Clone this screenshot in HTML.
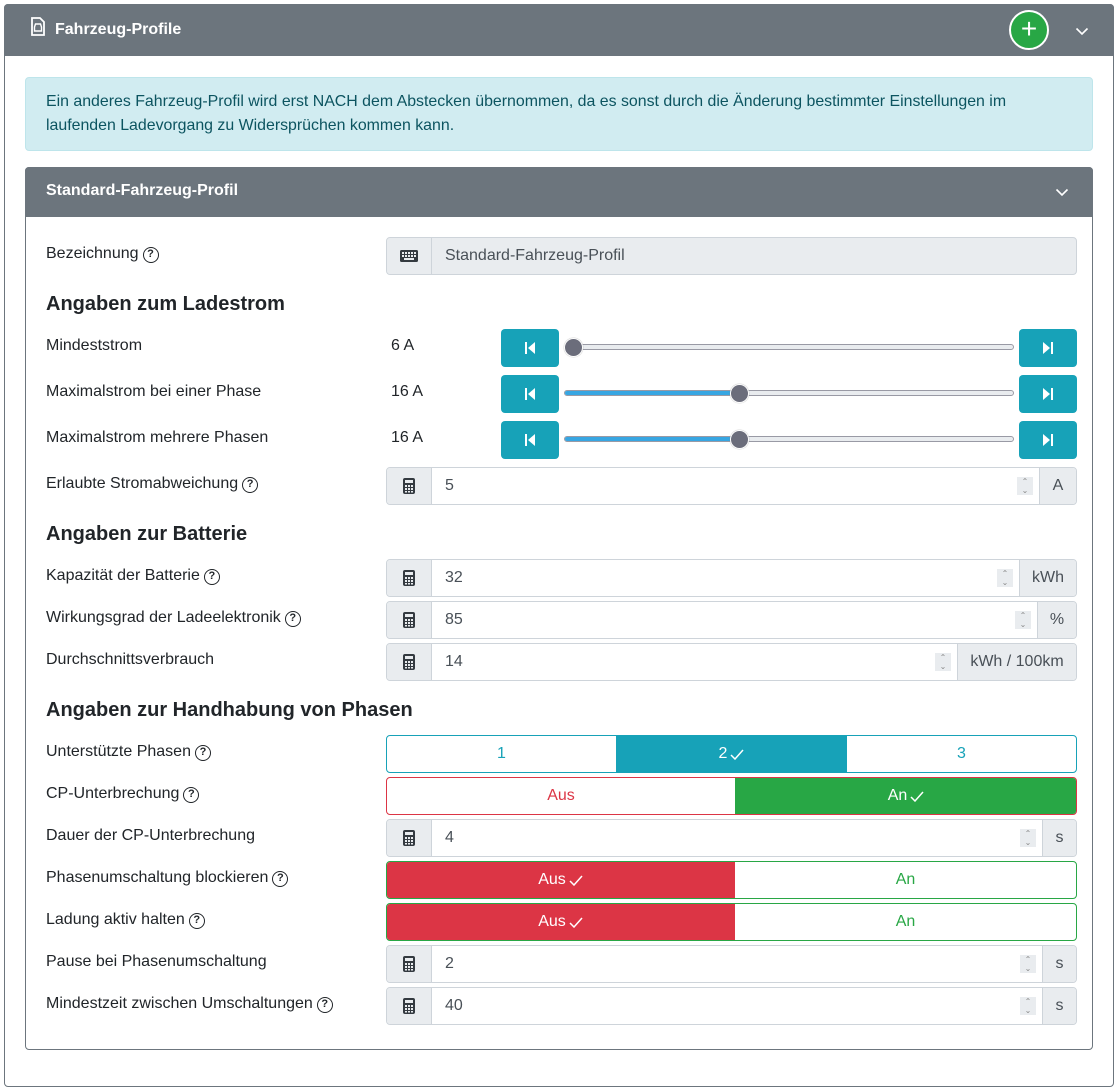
<!DOCTYPE html>
<html><head><meta charset="utf-8"><style>
*{box-sizing:border-box;margin:0;padding:0}
body{width:1118px;height:1092px;background:#fff;font-family:"Liberation Sans",sans-serif;font-size:16px;color:#212529;position:relative;overflow:hidden}
.a{position:absolute}
.outer{left:4px;top:4px;width:1110px;height:1083px;border:1px solid #6c757d;border-radius:4px}
.hdr{left:4px;top:4px;width:1110px;height:52px;background:#6c757d;border-radius:4px 4px 0 0}
.alert{left:25px;top:77px;width:1068px;height:74px;background:#d1ecf1;border:1px solid #bee5eb;border-radius:4px;color:#0c5460;padding:12px 20px;line-height:24px;font-size:15.9px}
.inner{left:25px;top:167px;width:1068px;height:883px;border:1px solid #6c757d;border-radius:4px}
.ihdr{left:25px;top:167px;width:1068px;height:50px;background:#6c757d;border-radius:4px 4px 0 0}
.lbl{left:46px;height:20px;line-height:20px}
.q{display:inline-block;width:16px;height:16px;border:1.3px solid #212529;border-radius:50%;font-size:11px;font-weight:bold;line-height:13px;text-align:center;vertical-align:1px;margin-left:4px}
h3{position:absolute;left:46px;font-size:20px;font-weight:bold;line-height:24px}
.ig{left:386px;height:38px;border:1px solid #ced4da;border-radius:4px;display:flex;overflow:hidden;background:#fff}
.ad{width:45px;background:#e9ecef;border-right:1px solid #ced4da;display:flex;align-items:center;justify-content:center}
.val{flex:1;padding-left:13px;line-height:36px;color:#495057;position:relative}
.unit{background:#e9ecef;border-left:1px solid #ced4da;line-height:36px;text-align:center;color:#495057}
.sp{position:absolute;right:6px;top:9px;width:16px;height:18px;background:#e9ecef;font-size:8px;line-height:9px;text-align:center;color:#888}
.btn{width:58px;height:38px;background:#17a2b8;border-radius:4px;display:flex;align-items:center;justify-content:center}
.track{left:564px;width:450px;height:6px;background:#e9ecef;border:1px solid #999aa5;border-radius:3px}
.fill{height:4px;background:#37a6e2;border-radius:3px}
.knob{width:19px;height:19px;border-radius:50%;background:#6b6d7b;border:1.5px solid #fff;box-shadow:0 0 1px #888}
.bg{left:386px;height:38px;display:flex;border-radius:4px;overflow:hidden}
.bg div{display:flex;align-items:center;justify-content:center}
.ck{margin-left:3px}
</style></head><body>
<div class="a outer"></div>
<div class="a hdr"></div>
<svg class="a" style="left:30px;top:17px" width="16" height="20" viewBox="0 0 16 20"><path d="M2 1h8l4 4v13H2z" fill="none" stroke="#fff" stroke-width="1.8"/><path d="M4.5 10l1-3h5l1 3v4h-7z" fill="none" stroke="#fff" stroke-width="1.4"/></svg>
<div class="a" style="left:55px;top:21px;color:#fff;font-weight:bold;font-size:16px">Fahrzeug-Profile</div>
<div class="a" style="left:1009px;top:10px;width:40px;height:40px;border-radius:50%;background:#28a745;border:2px solid #fff;color:#fff;font-size:28px;line-height:34px;text-align:center">+</div>
<svg class="a" style="left:1075px;top:27px" width="14" height="9"><path d="M1.5 1.5l5.5 5.5 5.5-5.5" fill="none" stroke="#fff" stroke-width="1.6"/></svg>
<div class="a alert">Ein anderes Fahrzeug-Profil wird erst NACH dem Abstecken übernommen, da es sonst durch die Änderung bestimmter Einstellungen im laufenden Ladevorgang zu Widersprüchen kommen kann.</div>
<div class="a inner"></div>
<div class="a ihdr"></div>
<div class="a" style="left:46px;top:182px;color:#fff;font-weight:bold;font-size:16px">Standard-Fahrzeug-Profil</div>
<svg class="a" style="left:1055px;top:188px" width="14" height="9"><path d="M1.5 1.5l5.5 5.5 5.5-5.5" fill="none" stroke="#fff" stroke-width="1.6"/></svg>

<div class="a lbl" style="top:244px">Bezeichnung<span class="q">?</span></div>
<div class="a ig" style="top:237px;width:691px;background:#e9ecef"><div class="ad"><svg width="18" height="12"><rect x="0" y="0" width="18" height="12" rx="1.5" fill="#343a40"/><g fill="#e9ecef"><rect x="2" y="2" width="2" height="2"/><rect x="5" y="2" width="2" height="2"/><rect x="8" y="2" width="2" height="2"/><rect x="11" y="2" width="2" height="2"/><rect x="14" y="2" width="2" height="2"/><rect x="2" y="5" width="2" height="2"/><rect x="5" y="5" width="2" height="2"/><rect x="8" y="5" width="2" height="2"/><rect x="11" y="5" width="2" height="2"/><rect x="14" y="5" width="2" height="2"/><rect x="4" y="8" width="10" height="2"/></g></svg></div><div class="val">Standard-Fahrzeug-Profil</div></div>

<h3 style="top:292px">Angaben zum Ladestrom</h3>

<div class="a lbl" style="top:336px">Mindeststrom</div><div class="a" style="left:391px;top:337px">6 A</div>
<div class="a lbl" style="top:382px">Maximalstrom bei einer Phase</div><div class="a" style="left:391px;top:383px">16 A</div>
<div class="a lbl" style="top:428px">Maximalstrom mehrere Phasen</div><div class="a" style="left:391px;top:429px">16 A</div>

<div class="a btn" style="left:501px;top:329px"><svg width="10" height="12"><rect x="0" y="0" width="2" height="12" fill="#fff"/><path d="M10 0v12L3 6z" fill="#fff"/></svg></div>
<div class="a btn" style="left:1019px;top:329px"><svg width="10" height="12"><rect x="8" y="0" width="2" height="12" fill="#fff"/><path d="M0 0v12l7-6z" fill="#fff"/></svg></div>
<div class="a track" style="top:344px"></div><div class="a knob" style="left:564px;top:338px"></div>

<div class="a btn" style="left:501px;top:375px"><svg width="10" height="12"><rect x="0" y="0" width="2" height="12" fill="#fff"/><path d="M10 0v12L3 6z" fill="#fff"/></svg></div>
<div class="a btn" style="left:1019px;top:375px"><svg width="10" height="12"><rect x="8" y="0" width="2" height="12" fill="#fff"/><path d="M0 0v12l7-6z" fill="#fff"/></svg></div>
<div class="a track" style="top:390px"><div class="fill" style="width:175px"></div></div><div class="a knob" style="left:730px;top:384px"></div>

<div class="a btn" style="left:501px;top:421px"><svg width="10" height="12"><rect x="0" y="0" width="2" height="12" fill="#fff"/><path d="M10 0v12L3 6z" fill="#fff"/></svg></div>
<div class="a btn" style="left:1019px;top:421px"><svg width="10" height="12"><rect x="8" y="0" width="2" height="12" fill="#fff"/><path d="M0 0v12l7-6z" fill="#fff"/></svg></div>
<div class="a track" style="top:436px"><div class="fill" style="width:175px"></div></div><div class="a knob" style="left:730px;top:430px"></div>

<div class="a lbl" style="top:474px">Erlaubte Stromabweichung<span class="q">?</span></div>
<div class="a ig" style="top:467px;width:691px"><div class="ad"><svg width="12" height="16"><rect width="12" height="16" rx="2" fill="#343a40"/><rect x="2" y="2" width="8" height="3" fill="#e9ecef"/><g fill="#e9ecef"><rect x="2" y="7" width="2" height="2"/><rect x="5" y="7" width="2" height="2"/><rect x="8" y="7" width="2" height="2"/><rect x="2" y="10" width="2" height="2"/><rect x="5" y="10" width="2" height="2"/><rect x="8" y="10" width="2" height="2"/><rect x="2" y="13" width="2" height="1.5"/><rect x="5" y="13" width="2" height="1.5"/><rect x="8" y="13" width="2" height="1.5"/></g></svg></div><div class="val">5<span class="sp">⌃<br>⌄</span></div><div class="unit" style="width:37px">A</div></div>

<h3 style="top:522px">Angaben zur Batterie</h3>

<div class="a lbl" style="top:566px">Kapazität der Batterie<span class="q">?</span></div>
<div class="a ig" style="top:559px;width:691px"><div class="ad"><svg width="12" height="16"><rect width="12" height="16" rx="2" fill="#343a40"/><rect x="2" y="2" width="8" height="3" fill="#e9ecef"/><g fill="#e9ecef"><rect x="2" y="7" width="2" height="2"/><rect x="5" y="7" width="2" height="2"/><rect x="8" y="7" width="2" height="2"/><rect x="2" y="10" width="2" height="2"/><rect x="5" y="10" width="2" height="2"/><rect x="8" y="10" width="2" height="2"/><rect x="2" y="13" width="2" height="1.5"/><rect x="5" y="13" width="2" height="1.5"/><rect x="8" y="13" width="2" height="1.5"/></g></svg></div><div class="val">32<span class="sp">⌃<br>⌄</span></div><div class="unit" style="width:57px">kWh</div></div>

<div class="a lbl" style="top:608px">Wirkungsgrad der Ladeelektronik<span class="q">?</span></div>
<div class="a ig" style="top:601px;width:691px"><div class="ad"><svg width="12" height="16"><rect width="12" height="16" rx="2" fill="#343a40"/><rect x="2" y="2" width="8" height="3" fill="#e9ecef"/><g fill="#e9ecef"><rect x="2" y="7" width="2" height="2"/><rect x="5" y="7" width="2" height="2"/><rect x="8" y="7" width="2" height="2"/><rect x="2" y="10" width="2" height="2"/><rect x="5" y="10" width="2" height="2"/><rect x="8" y="10" width="2" height="2"/><rect x="2" y="13" width="2" height="1.5"/><rect x="5" y="13" width="2" height="1.5"/><rect x="8" y="13" width="2" height="1.5"/></g></svg></div><div class="val">85<span class="sp">⌃<br>⌄</span></div><div class="unit" style="width:39px">%</div></div>

<div class="a lbl" style="top:650px">Durchschnittsverbrauch</div>
<div class="a ig" style="top:643px;width:691px"><div class="ad"><svg width="12" height="16"><rect width="12" height="16" rx="2" fill="#343a40"/><rect x="2" y="2" width="8" height="3" fill="#e9ecef"/><g fill="#e9ecef"><rect x="2" y="7" width="2" height="2"/><rect x="5" y="7" width="2" height="2"/><rect x="8" y="7" width="2" height="2"/><rect x="2" y="10" width="2" height="2"/><rect x="5" y="10" width="2" height="2"/><rect x="8" y="10" width="2" height="2"/><rect x="2" y="13" width="2" height="1.5"/><rect x="5" y="13" width="2" height="1.5"/><rect x="8" y="13" width="2" height="1.5"/></g></svg></div><div class="val">14<span class="sp">⌃<br>⌄</span></div><div class="unit" style="width:119px">kWh / 100km</div></div>

<h3 style="top:698px">Angaben zur Handhabung von Phasen</h3>

<div class="a lbl" style="top:742px">Unterstützte Phasen<span class="q">?</span></div>
<div class="a bg" style="top:735px;width:691px;border:1px solid #17a2b8"><div style="width:229px;color:#17a2b8">1</div><div style="width:231px;background:#17a2b8;color:#fff">2<svg class="ck" width="14" height="11"><path d="M1 6l4 4 8-9" fill="none" stroke="#fff" stroke-width="1.5"/></svg></div><div style="flex:1;color:#17a2b8">3</div></div>

<div class="a lbl" style="top:784px">CP-Unterbrechung<span class="q">?</span></div>
<div class="a bg" style="top:777px;width:691px;border:1px solid #dc3545"><div style="width:348px;color:#dc3545">Aus</div><div style="flex:1;background:#28a745;color:#fff;margin:-1px -1px -1px 0">An<svg class="ck" width="14" height="11"><path d="M1 6l4 4 8-9" fill="none" stroke="#fff" stroke-width="1.5"/></svg></div></div>

<div class="a lbl" style="top:826px">Dauer der CP-Unterbrechung</div>
<div class="a ig" style="top:819px;width:691px"><div class="ad"><svg width="12" height="16"><rect width="12" height="16" rx="2" fill="#343a40"/><rect x="2" y="2" width="8" height="3" fill="#e9ecef"/><g fill="#e9ecef"><rect x="2" y="7" width="2" height="2"/><rect x="5" y="7" width="2" height="2"/><rect x="8" y="7" width="2" height="2"/><rect x="2" y="10" width="2" height="2"/><rect x="5" y="10" width="2" height="2"/><rect x="8" y="10" width="2" height="2"/><rect x="2" y="13" width="2" height="1.5"/><rect x="5" y="13" width="2" height="1.5"/><rect x="8" y="13" width="2" height="1.5"/></g></svg></div><div class="val">4<span class="sp">⌃<br>⌄</span></div><div class="unit" style="width:34px">s</div></div>

<div class="a lbl" style="top:868px">Phasenumschaltung blockieren<span class="q">?</span></div>
<div class="a bg" style="top:861px;width:691px;border:1px solid #28a745"><div style="width:349px;background:#dc3545;color:#fff;margin:-1px 0 -1px -1px">Aus<svg class="ck" width="14" height="11"><path d="M1 6l4 4 8-9" fill="none" stroke="#fff" stroke-width="1.5"/></svg></div><div style="flex:1;color:#28a745">An</div></div>

<div class="a lbl" style="top:910px">Ladung aktiv halten<span class="q">?</span></div>
<div class="a bg" style="top:903px;width:691px;border:1px solid #28a745"><div style="width:349px;background:#dc3545;color:#fff;margin:-1px 0 -1px -1px">Aus<svg class="ck" width="14" height="11"><path d="M1 6l4 4 8-9" fill="none" stroke="#fff" stroke-width="1.5"/></svg></div><div style="flex:1;color:#28a745">An</div></div>

<div class="a lbl" style="top:952px">Pause bei Phasenumschaltung</div>
<div class="a ig" style="top:945px;width:691px"><div class="ad"><svg width="12" height="16"><rect width="12" height="16" rx="2" fill="#343a40"/><rect x="2" y="2" width="8" height="3" fill="#e9ecef"/><g fill="#e9ecef"><rect x="2" y="7" width="2" height="2"/><rect x="5" y="7" width="2" height="2"/><rect x="8" y="7" width="2" height="2"/><rect x="2" y="10" width="2" height="2"/><rect x="5" y="10" width="2" height="2"/><rect x="8" y="10" width="2" height="2"/><rect x="2" y="13" width="2" height="1.5"/><rect x="5" y="13" width="2" height="1.5"/><rect x="8" y="13" width="2" height="1.5"/></g></svg></div><div class="val">2<span class="sp">⌃<br>⌄</span></div><div class="unit" style="width:34px">s</div></div>

<div class="a lbl" style="top:994px">Mindestzeit zwischen Umschaltungen<span class="q">?</span></div>
<div class="a ig" style="top:987px;width:691px"><div class="ad"><svg width="12" height="16"><rect width="12" height="16" rx="2" fill="#343a40"/><rect x="2" y="2" width="8" height="3" fill="#e9ecef"/><g fill="#e9ecef"><rect x="2" y="7" width="2" height="2"/><rect x="5" y="7" width="2" height="2"/><rect x="8" y="7" width="2" height="2"/><rect x="2" y="10" width="2" height="2"/><rect x="5" y="10" width="2" height="2"/><rect x="8" y="10" width="2" height="2"/><rect x="2" y="13" width="2" height="1.5"/><rect x="5" y="13" width="2" height="1.5"/><rect x="8" y="13" width="2" height="1.5"/></g></svg></div><div class="val">40<span class="sp">⌃<br>⌄</span></div><div class="unit" style="width:34px">s</div></div>
</body></html>
